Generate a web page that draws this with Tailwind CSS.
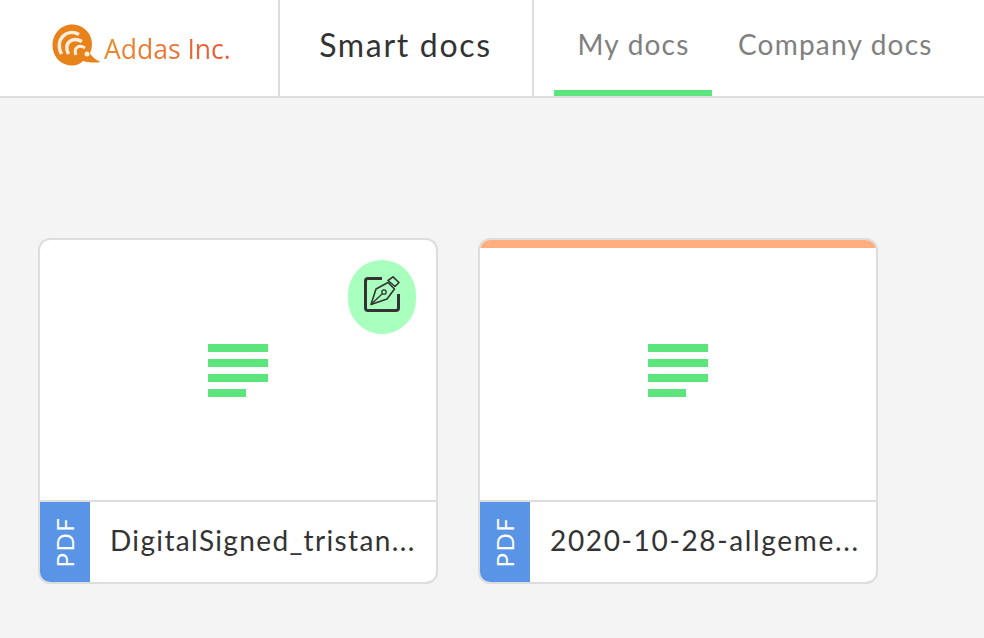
<!DOCTYPE html>
<html lang="en">
<head>
    <meta charset="UTF-8">
    <title>Smart docs</title>
    <script src="https://cdn.jsdelivr.net/npm/@tailwindcss/browser@4"></script>
</head>
<body class="h-[638px] w-[984px] overflow-hidden bg-[#f4f4f4] font-['Lato',sans-serif] text-[#333333]">
    <header class="flex h-[98px] border-b-2 border-[#dddddd] bg-white">
        <div class="flex w-[280px] items-center border-r-2 border-[#dddddd] pb-[4px] pl-[51px]">
            <svg width="50" height="44" viewBox="0 0 50 44">
                <path d="M21 0.500C32 0.500 41 9 41 20C41 24 40 27 39 29.500C41 33 45 36 49.500 38C43 39 37 38.500 32 37C29 40 25 41.500 21 41.500C9.500 41.500 1.500 32 1.500 21C1.500 10 10 0.500 21 0.500Z" fill="#e8831c"/>
                <path d="M10.500 30C3 15 16 4 28 10.500" fill="none" stroke="#fdeedd" stroke-width="3.500"/>
                <path d="M17.500 30C12 19 21 12 31 17.500" fill="none" stroke="#fdeedd" stroke-width="3.500"/>
                <path d="M25 31C22 24 28 20 34 24" fill="none" stroke="#fdeedd" stroke-width="3"/>
                <circle cx="36" cy="30" r="2.500" fill="#fdeedd"/>
            </svg>
            <span class="ml-[3px] mt-[6px] bg-gradient-to-r from-[#ea8a2a] to-[#ee5332] bg-clip-text font-['Open_Sans',sans-serif] text-[26.500px] leading-none text-transparent">Addas Inc.</span>
        </div>
        <div class="flex w-[254px] items-center justify-center border-r-2 border-[#dddddd] pb-[6px] pr-[1px] text-[32px] tracking-[1.7px]">Smart docs</div>
        <nav class="flex pl-[20px] text-[28px] tracking-[1.2px] text-[#808080]">
            <a class="flex w-[158px] items-center justify-center border-b-[6px] border-[#5ce57d] pb-[2px] pl-[1px]">My docs</a>
            <a class="ml-[26px] flex items-center pb-[8px]">Company docs</a>
        </nav>
    </header>

    <main class="flex gap-[40px] pl-[38px] pt-[140px]">
        <div class="relative flex h-[346px] w-[400px] flex-col overflow-hidden rounded-[12px] border-2 border-[#dddddd] bg-white">
            <div class="flex flex-1 items-center justify-center">
                <div class="flex w-[60px] flex-col gap-[7px]">
                    <div class="h-[8px] bg-[#5ce57d]"></div>
                    <div class="h-[8px] bg-[#5ce57d]"></div>
                    <div class="h-[8px] bg-[#5ce57d]"></div>
                    <div class="h-[8px] w-[38px] bg-[#5ce57d]"></div>
                </div>
            </div>
            <div class="absolute right-[20px] top-[20px] flex h-[74px] w-[68px] items-center justify-center rounded-full bg-[#a9ffbd] pb-[4px]">
                <svg width="38" height="38" viewBox="0 0 38 38" fill="none" stroke="#333333">
                    <path d="M19 2.500H5Q2.500 2.500 2.500 5V32Q2.500 34.500 5 34.500H33Q35.500 34.500 35.500 32V18" stroke-width="3"/>
                    <path d="M8 28.500L13 13L25 6.500L31.500 13L24 23Z" stroke-width="1.600" stroke-linejoin="round"/>
                    <path d="M25 4.500L30 0.800L36 6.500L32 10.500Z" stroke-width="1.600" stroke-linejoin="round"/>
                    <path d="M8 28.500L19 18" stroke-width="1.300"/>
                    <circle cx="21" cy="16" r="2.200" stroke-width="1.300"/>
                </svg>
            </div>
            <div class="flex h-[82px] border-t-2 border-[#dddddd]">
                <div class="flex w-[50px] items-center justify-center bg-[#5a94e6] text-white">
                    <span class="-rotate-90 text-[24px] tracking-[1.5px]">PDF</span>
                </div>
                <div class="flex-1 pl-[20px] pt-[20px] text-[28px] leading-[36px] tracking-[1.35px]">DigitalSigned_tristan...</div>
            </div>
        </div>

        <div class="flex h-[346px] w-[400px] flex-col overflow-hidden rounded-[12px] border-2 border-[#dddddd] bg-white">
            <div class="h-[8px] bg-[#ffae80]"></div>
            <div class="flex flex-1 items-center justify-center pb-[8px]">
                <div class="flex w-[60px] flex-col gap-[7px]">
                    <div class="h-[8px] bg-[#5ce57d]"></div>
                    <div class="h-[8px] bg-[#5ce57d]"></div>
                    <div class="h-[8px] bg-[#5ce57d]"></div>
                    <div class="h-[8px] w-[38px] bg-[#5ce57d]"></div>
                </div>
            </div>
            <div class="flex h-[82px] border-t-2 border-[#dddddd]">
                <div class="flex w-[50px] items-center justify-center bg-[#5a94e6] text-white">
                    <span class="-rotate-90 text-[24px] tracking-[1.5px]">PDF</span>
                </div>
                <div class="flex-1 pl-[20px] pt-[20px] text-[28px] leading-[36px] tracking-[1.65px]">2020-10-28-allgeme...</div>
            </div>
        </div>
    </main>
</body>
</html>
